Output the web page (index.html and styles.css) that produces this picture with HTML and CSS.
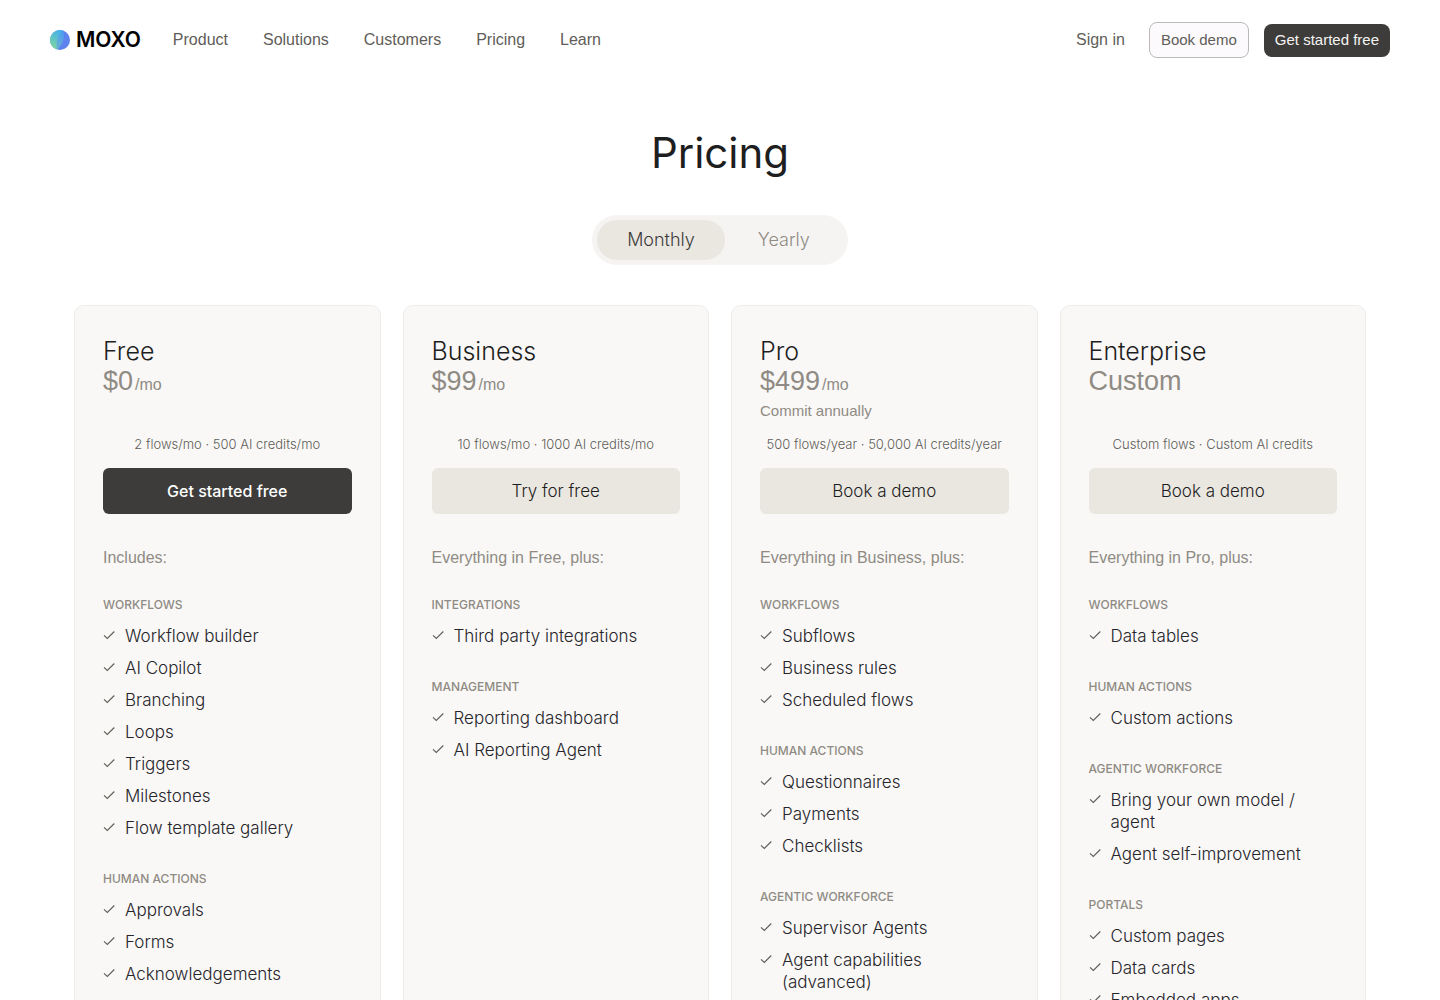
FILE: index.html
```html
<!DOCTYPE html>
<html lang="en">
<head>
  <meta charset="UTF-8">
  <meta name="viewport" content="width=device-width, initial-scale=1.0">
  <title>Pricing | Moxo</title>
  <link rel="stylesheet" href="styles.css">
</head>
<body>
  <svg class="defs" width="0" height="0" aria-hidden="true">
    <symbol id="check" viewBox="0 0 12 12">
      <path d="M1 6.3L4.3 9.5L11.3 2.5" fill="none" stroke="currentColor" stroke-width="1.1"/>
    </symbol>
  </svg>

  <header class="header">
    <a class="logo" href="#">
      <svg class="logo-mark" viewBox="0 0 20 20" aria-hidden="true">
        <defs>
          <linearGradient id="left" x1="0.7" y1="0" x2="0.3" y2="1">
            <stop offset="0" stop-color="#45b0ed"/>
            <stop offset="1" stop-color="#7ed79b"/>
          </linearGradient>
          <linearGradient id="mid" x1="0.7" y1="0" x2="0.3" y2="1">
            <stop offset="0" stop-color="#4a9df0"/>
            <stop offset="1" stop-color="#69b0d2"/>
          </linearGradient>
        </defs>
        <circle cx="10" cy="10" r="10" fill="#5e82ee"/>
        <path d="M13 0.5C15.500 7 12.500 15.500 7 19.500C4 15 8 4 13 0.5Z" fill="url(#mid)"/>
        <path d="M13 0.5A10 10 0 0 0 0 10A10 10 0 0 0 7 19.500C5.500 12 8 5 13 0.5Z" fill="url(#left)"/>
      </svg>
      <span>MOXO</span>
    </a>
    <nav class="nav">
      <a href="#">Product</a>
      <a href="#">Solutions</a>
      <a href="#">Customers</a>
      <a href="#">Pricing</a>
      <a href="#">Learn</a>
    </nav>
    <div class="header-actions">
      <a class="sign-in" href="#">Sign in</a>
      <a class="btn-demo" href="#">Book demo</a>
      <a class="btn-start" href="#">Get started free</a>
    </div>
  </header>

  <main>
    <h1>Pricing</h1>

    <div class="toggle">
      <button type="button" class="active" aria-pressed="true">Monthly</button>
      <button type="button" aria-pressed="false">Yearly</button>
    </div>

    <div class="plans">
      <section class="plan">
        <div class="plan-head">
          <h2>Free</h2>
          <p class="price">$0<span>/mo</span></p>
        </div>
        <p class="quota">2 flows/mo · 500 AI credits/mo</p>
        <a class="cta cta-dark" href="#">Get started free</a>
        <p class="intro">Includes:</p>
        <h3>Workflows</h3>
        <ul>
          <li><svg><use href="#check"/></svg>Workflow builder</li>
          <li><svg><use href="#check"/></svg>AI Copilot</li>
          <li><svg><use href="#check"/></svg>Branching</li>
          <li><svg><use href="#check"/></svg>Loops</li>
          <li><svg><use href="#check"/></svg>Triggers</li>
          <li><svg><use href="#check"/></svg>Milestones</li>
          <li><svg><use href="#check"/></svg>Flow template gallery</li>
        </ul>
        <h3>Human actions</h3>
        <ul>
          <li><svg><use href="#check"/></svg>Approvals</li>
          <li><svg><use href="#check"/></svg>Forms</li>
          <li><svg><use href="#check"/></svg>Acknowledgements</li>
        </ul>
      </section>

      <section class="plan">
        <div class="plan-head">
          <h2>Business</h2>
          <p class="price">$99<span>/mo</span></p>
        </div>
        <p class="quota">10 flows/mo · 1000 AI credits/mo</p>
        <a class="cta" href="#">Try for free</a>
        <p class="intro">Everything in Free, plus:</p>
        <h3>Integrations</h3>
        <ul>
          <li><svg><use href="#check"/></svg>Third party integrations</li>
        </ul>
        <h3>Management</h3>
        <ul>
          <li><svg><use href="#check"/></svg>Reporting dashboard</li>
          <li><svg><use href="#check"/></svg>AI Reporting Agent</li>
        </ul>
      </section>

      <section class="plan">
        <div class="plan-head">
          <h2>Pro</h2>
          <p class="price">$499<span>/mo</span></p>
          <p class="commit">Commit annually</p>
        </div>
        <p class="quota">500 flows/year · 50,000 AI credits/year</p>
        <a class="cta" href="#">Book a demo</a>
        <p class="intro">Everything in Business, plus:</p>
        <h3>Workflows</h3>
        <ul>
          <li><svg><use href="#check"/></svg>Subflows</li>
          <li><svg><use href="#check"/></svg>Business rules</li>
          <li><svg><use href="#check"/></svg>Scheduled flows</li>
        </ul>
        <h3>Human actions</h3>
        <ul>
          <li><svg><use href="#check"/></svg>Questionnaires</li>
          <li><svg><use href="#check"/></svg>Payments</li>
          <li><svg><use href="#check"/></svg>Checklists</li>
        </ul>
        <h3>Agentic workforce</h3>
        <ul>
          <li><svg><use href="#check"/></svg>Supervisor Agents</li>
          <li><svg><use href="#check"/></svg>Agent capabilities<br>(advanced)</li>
        </ul>
      </section>

      <section class="plan">
        <div class="plan-head">
          <h2>Enterprise</h2>
          <p class="price">Custom</p>
        </div>
        <p class="quota">Custom flows · Custom AI credits</p>
        <a class="cta" href="#">Book a demo</a>
        <p class="intro">Everything in Pro, plus:</p>
        <h3>Workflows</h3>
        <ul>
          <li><svg><use href="#check"/></svg>Data tables</li>
        </ul>
        <h3>Human actions</h3>
        <ul>
          <li><svg><use href="#check"/></svg>Custom actions</li>
        </ul>
        <h3>Agentic workforce</h3>
        <ul>
          <li><svg><use href="#check"/></svg>Bring your own model /<br>agent</li>
          <li><svg><use href="#check"/></svg>Agent self-improvement</li>
        </ul>
        <h3>Portals</h3>
        <ul>
          <li><svg><use href="#check"/></svg>Custom pages</li>
          <li><svg><use href="#check"/></svg>Data cards</li>
          <li><svg><use href="#check"/></svg>Embedded apps</li>
        </ul>
      </section>
    </div>
  </main>
</body>
</html>
```

FILE: styles.css
```css
* {
  box-sizing: border-box;
}

body {
  margin: 0;
  font-family: Inter, "Liberation Sans", sans-serif;
  font-size: 17px;
  font-weight: 300;
  line-height: 22px;
  color: #1e1e1e;
  background: #fff;
}

h1, h2, h3, p, ul {
  margin: 0;
  padding: 0;
  font-weight: 300;
}

a {
  color: inherit;
  text-decoration: none;
}

.defs {
  display: none;
}

.header {
  display: flex;
  align-items: center;
  height: 80px;
  padding: 0 50px;
  font-family: "Liberation Sans", Arial, sans-serif;
  font-size: 16px;
  color: #5f5d59;
}

.logo {
  display: flex;
  align-items: center;
  gap: 6px;
  font-family: Inter, sans-serif;
  font-size: 21px;
  font-weight: 600;
  color: #000;
}

.logo-mark {
  width: 20px;
  height: 20px;
}

.nav {
  display: flex;
  gap: 35px;
  margin-left: 32px;
}

.header-actions {
  display: flex;
  align-items: center;
  margin-left: auto;
}

.btn-demo {
  margin-left: 24px;
  padding: 6px 11px;
  border: 1px solid #bdb9b8;
  border-radius: 8px;
  background: #fcfafc;
  font-size: 15px;
}

.btn-start {
  margin-left: 15px;
  padding: 5px 11px 6px;
  border-radius: 8px;
  background: #3d3c3a;
  color: #f5f4f2;
  font-size: 15px;
}

main {
  max-width: 1340px;
  margin: 0 auto;
  padding: 47px 24px 40px;
}

h1 {
  font-size: 42px;
  font-weight: 400;
  line-height: 52px;
  text-align: center;
}

.toggle {
  display: flex;
  width: fit-content;
  margin: 36px auto 40px;
  padding: 5px;
  border-radius: 25px;
  background: #f5f4f2;
}

.toggle button {
  min-width: 118px;
  height: 40px;
  padding: 0 30px;
  border: 0;
  border-radius: 20px;
  background: none;
  font: inherit;
  font-size: 18px;
  color: #8f8b84;
}

.toggle .active {
  background: #eae7e1;
  color: #3d3c3a;
}

.plans {
  display: grid;
  grid-template-columns: repeat(4, 1fr);
  gap: 22px;
}

.plan {
  padding: 30px 28px 40px;
  border: 1px solid #eeece9;
  border-radius: 10px;
  background: #f9f8f6;
}

.plan-head {
  min-height: 98px;
}

h2,
.price {
  font-size: 25px;
  line-height: 30px;
}

.price {
  font-family: "Liberation Sans", Arial, sans-serif;
  font-size: 27px;
  color: #8f8b84;
}

.price span {
  margin-left: 2px;
  font-size: 16px;
}

.commit {
  font-family: "Liberation Sans", Arial, sans-serif;
  font-size: 15px;
  color: #8f8b84;
}

.quota {
  font-size: 13px;
  line-height: 20px;
  text-align: center;
  white-space: nowrap;
  color: #5f5d59;
}

.cta {
  display: block;
  margin-top: 14px;
  border-radius: 6px;
  background: #eae7e1;
  line-height: 46px;
  text-align: center;
}

.cta-dark {
  background: #3d3c3a;
  color: #fff;
  font-size: 16px;
  font-weight: 500;
}

.intro {
  margin: 32px 0 27px;
  font-family: "Liberation Sans", Arial, sans-serif;
  font-size: 16px;
  line-height: 24px;
  color: #8f8b84;
}

h3 {
  margin-bottom: 12px;
  font-size: 12px;
  font-weight: 500;
  line-height: 16px;
  text-transform: uppercase;
  color: #8f8b84;
}

ul {
  display: grid;
  gap: 10px;
  margin-bottom: 32px;
  list-style: none;
}

li {
  padding-left: 22px;
  color: #26252b;
}

li svg {
  float: left;
  width: 12px;
  height: 12px;
  margin: 4px 0 0 -22px;
  color: #5f5d59;
}
```
